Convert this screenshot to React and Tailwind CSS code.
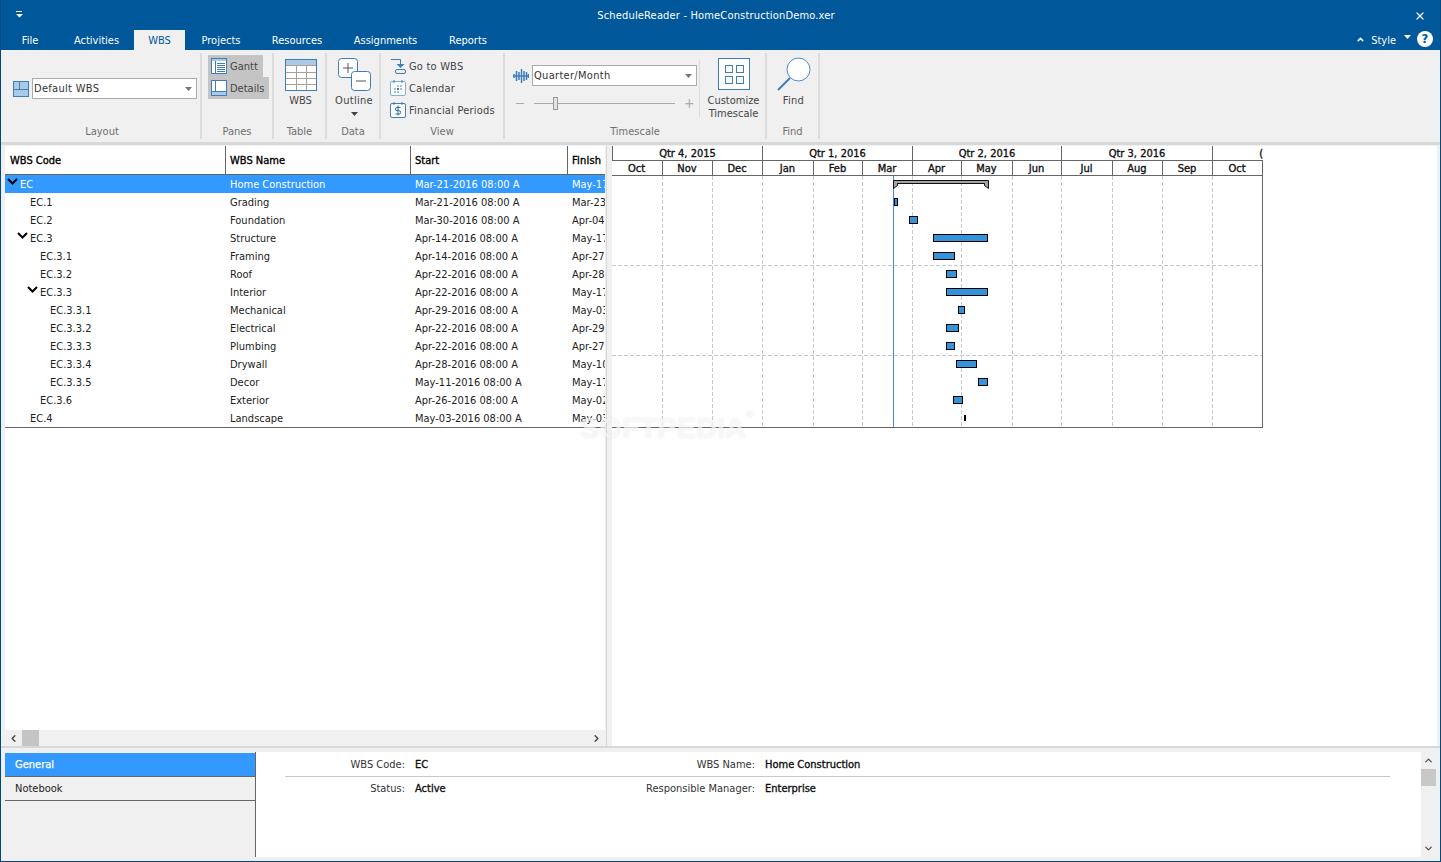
import React from 'react';
import { ChevronLeft, ChevronRight, ChevronUp, ChevronDown, X } from 'lucide-react';

const rows = [
  { code: 'EC', name: 'Home Construction', start: 'Mar-21-2016 08:00 A', finish: 'May-17', indent: 15, open: true, selected: true },
  { code: 'EC.1', name: 'Grading', start: 'Mar-21-2016 08:00 A', finish: 'Mar-23', indent: 25 },
  { code: 'EC.2', name: 'Foundation', start: 'Mar-30-2016 08:00 A', finish: 'Apr-04', indent: 25 },
  { code: 'EC.3', name: 'Structure', start: 'Apr-14-2016 08:00 A', finish: 'May-17', indent: 25, open: true },
  { code: 'EC.3.1', name: 'Framing', start: 'Apr-14-2016 08:00 A', finish: 'Apr-27', indent: 35 },
  { code: 'EC.3.2', name: 'Roof', start: 'Apr-22-2016 08:00 A', finish: 'Apr-28', indent: 35 },
  { code: 'EC.3.3', name: 'Interior', start: 'Apr-22-2016 08:00 A', finish: 'May-17', indent: 35, open: true },
  { code: 'EC.3.3.1', name: 'Mechanical', start: 'Apr-29-2016 08:00 A', finish: 'May-03', indent: 45 },
  { code: 'EC.3.3.2', name: 'Electrical', start: 'Apr-22-2016 08:00 A', finish: 'Apr-29', indent: 45 },
  { code: 'EC.3.3.3', name: 'Plumbing', start: 'Apr-22-2016 08:00 A', finish: 'Apr-27', indent: 45 },
  { code: 'EC.3.3.4', name: 'Drywall', start: 'Apr-28-2016 08:00 A', finish: 'May-10', indent: 45 },
  { code: 'EC.3.3.5', name: 'Decor', start: 'May-11-2016 08:00 A', finish: 'May-17', indent: 45 },
  { code: 'EC.3.6', name: 'Exterior', start: 'Apr-26-2016 08:00 A', finish: 'May-02', indent: 35 },
  { code: 'EC.4', name: 'Landscape', start: 'May-03-2016 08:00 A', finish: 'May-03', indent: 25 },
];

const quarters = [
  { label: 'Qtr 4, 2015', w: 150 },
  { label: 'Qtr 1, 2016', w: 150 },
  { label: 'Qtr 2, 2016', w: 149 },
  { label: 'Qtr 3, 2016', w: 151 },
];

const months = [
  ['Oct', 51], ['Nov', 50], ['Dec', 50], ['Jan', 51], ['Feb', 49], ['Mar', 50],
  ['Apr', 49], ['May', 51], ['Jun', 49], ['Jul', 51], ['Aug', 50], ['Sep', 50], ['Oct', 50],
];

// chart coordinates, x from 612 and y from the top of the first row
const bars = [
  [282, 22, 4, 8], [297, 40, 9, 8], [321, 58, 55, 8], [321, 76, 22, 8], [334, 94, 11, 8],
  [334, 112, 42, 8], [346, 130, 7, 8], [334, 148, 13, 8], [334, 166, 9, 8], [344, 184, 21, 8],
  [366, 202, 10, 8], [341, 220, 10, 8],
];

const gridX = [50, 100, 150, 201, 250, 300, 349, 400, 449, 500, 550, 600];

const RibbonGroup = ({ label, width, children }) => (
  <div className="flex flex-col border-r-2 border-[#dcdcdc] h-[86px] mt-[3px]" style={{ width }}>
    <div className="h-[70px] relative">{children}</div>
    <div className="h-[16px] text-center text-[#6f6f6f] leading-[18px]">{label}</div>
  </div>
);

const Caret = ({ className }) => (
  <svg width="7" height="4" viewBox="0 0 7 4" className={className}>
    <path d="M0 0h7L3.5 4z" fill="currentColor" />
  </svg>
);

const Combo = ({ value, width }) => (
  <div className="flex items-center justify-between bg-white border border-[#ababab] h-[21px] pl-[1px] pr-[4px] text-[#333] tracking-[0.3px]" style={{ width }}>
    <span className="pt-[2px]">{value}</span>
    <Caret className="text-[#777]" />
  </div>
);

const GridIcon = () => (
  <svg width="32" height="32" viewBox="0 0 32 32">
    <rect x="0.5" y="0.5" width="31" height="31" fill="#fff" stroke="#3f7cba" />
    <rect x="1" y="1" width="30" height="5" fill="#a9cbe8" />
    <path d="M1 6.5h30M1 13.5h30M1 19.5h30M1 25.5h30M11.5 7v24M21.5 7v24" stroke="#a8a098" />
  </svg>
);

const OutlineIcon = () => (
  <svg width="33" height="33" viewBox="0 0 33 33">
    <rect x="0.5" y="0.5" width="19" height="19" rx="3" fill="#fff" stroke="#3f7cba" />
    <path d="M5 10h10M10 5v10" stroke="#555" />
    <rect x="13.5" y="13.5" width="19" height="19" rx="3" fill="#fff" stroke="#3f7cba" />
    <path d="M18 23h10" stroke="#555" />
  </svg>
);

const LayoutIcon = () => (
  <svg width="16" height="16" viewBox="0 0 16 16">
    <rect x="0.5" y="0.5" width="15" height="15" fill="#a9cbe8" stroke="#3f7cba" />
    <path d="M0 8.5h16M6.5 0v8" stroke="#3f7cba" />
  </svg>
);

const GanttIcon = () => (
  <svg width="16" height="16" viewBox="0 0 16 16">
    <rect x="0.5" y="0.5" width="15" height="15" fill="#fff" stroke="#3f7cba" />
    <rect x="1" y="1" width="14" height="2" fill="#a9cbe8" />
    <path d="M4.5 3v12" stroke="#3f7cba" />
    <path d="M6 5.5h8M6 7.5h8M6 9.5h8M6 11.5h8M6 13.5h8" stroke="#3f7cba" />
  </svg>
);

const DetailsIcon = () => (
  <svg width="16" height="16" viewBox="0 0 16 16">
    <rect x="0.5" y="0.5" width="15" height="15" fill="#fff" stroke="#3f7cba" />
    <rect x="1" y="12" width="14" height="3" fill="#a9cbe8" />
    <path d="M0 11.5h16M4.5 1v10" stroke="#3f7cba" />
  </svg>
);

const GoToIcon = () => (
  <svg width="16" height="16" viewBox="0 0 16 16" fill="none">
    <path d="M1 1.5h9.5V7" stroke="#3f7cba" />
    <path d="M6.5 6h8L10.5 10z" fill="#3f7cba" />
    <rect x="5.5" y="11.5" width="10" height="4" rx="1.5" stroke="#3f7cba" />
  </svg>
);

const CalendarIcon = () => (
  <svg width="16" height="16" viewBox="0 0 16 16" fill="none">
    <rect x="0.5" y="1.5" width="15" height="14" rx="1.5" fill="#fff" stroke="#7fb0dc" />
    <path d="M4 0v3M12 0v3" stroke="#3f7cba" />
    <path d="M7 5h2v2H7zM10 5h2v2h-2zM4 8h2v2H4zM10 8h2v2h-2zM4 11h2v2H4zM7 11h2v2H7z" fill="#9cc2e5" />
    <path d="M7 8h2v2H7z" fill="#3f7cba" />
  </svg>
);

const DollarIcon = () => (
  <svg width="16" height="16" viewBox="0 0 16 16" fill="none">
    <rect x="0.5" y="1.5" width="15" height="14" rx="1.5" fill="#fff" stroke="#3f7cba" />
    <path d="M4 0v3M12 0v3" stroke="#3f7cba" />
    <path d="M10.5 5.5H7a1.5 1.5 0 0 0 0 3.2h2a1.5 1.5 0 0 1 0 3.3H5.5M8 3.5v10" stroke="#2f6aa8" />
  </svg>
);

const WaveIcon = () => (
  <svg width="16" height="14" viewBox="0 0 16 14">
    <path d="M1 5v4M3.5 2v10M6 3v8M8.5 0v14M11 2v10M13.5 3v8M15.5 5v4M0 7h16" stroke="#3f7cba" strokeWidth="1.5" />
  </svg>
);

const TimescaleIcon = () => (
  <svg width="32" height="32" viewBox="0 0 32 32" fill="none">
    <rect x="0.5" y="0.5" width="31" height="31" fill="#fff" stroke="#3f7cba" />
    <rect x="7.5" y="7.5" width="7" height="7" stroke="#3f7cba" />
    <rect x="18.5" y="7.5" width="7" height="7" stroke="#3f7cba" />
    <rect x="7.5" y="18.5" width="7" height="7" stroke="#3f7cba" />
    <rect x="18.5" y="18.5" width="7" height="7" stroke="#3f7cba" />
  </svg>
);

const FindIcon = () => (
  <svg width="34" height="34" viewBox="0 0 34 34" fill="none">
    <circle cx="21.5" cy="12.5" r="11.5" fill="#fff" stroke="#4a8ac6" />
    <path d="M13 21L1 33" stroke="#3f7cba" strokeWidth="2" />
  </svg>
);

const SummaryBar = () => (
  <svg width="97" height="9" viewBox="0 0 97 9" className="absolute left-[281px] top-[4px]">
    <path d="M0.5 0.5h95v8l-4-3v-2h-87v2l-4 3z" fill="#a0a4a8" stroke="#111" />
    <path d="M4.5 3.5h87" stroke="#111" />
  </svg>
);

const TableRow = ({ row }) => (
  <div className={`flex h-[18px] leading-[20px] whitespace-nowrap ${row.selected ? 'bg-[#3399ff] text-white' : 'text-[#222]'}`}>
    <div className="w-[225px] relative shrink-0" style={{ paddingLeft: row.indent }}>
      {row.open && (
        <svg width="11" height="7" viewBox="0 0 11 7" className="absolute top-[3px]" style={{ left: row.indent - 13 }}>
          <path d="M1 1l4.5 4.5L10 1" fill="none" stroke="#000" strokeWidth="2" />
        </svg>
      )}
      {row.code}
    </div>
    <div className="w-[185px] shrink-0">{row.name}</div>
    <div className="w-[157px] shrink-0">{row.start}</div>
    <div className="w-[33px] h-[18px] shrink-0 overflow-hidden">{row.finish}</div>
  </div>
);

export default function App() {
  return (
    <div className="relative w-[1441px] h-[862px] overflow-hidden flex flex-col bg-[#00589b] text-[11px] border-x border-b border-[#00487f] font-['DejaVu_Sans_Condensed','DejaVu_Sans',sans-serif]">
      {/* title bar */}
      <div className="h-[28px] relative flex items-center justify-center text-white shrink-0 pr-[9px]">
        <svg width="7" height="7" viewBox="0 0 7 7" className="absolute left-[15px] top-[11px]">
          <path d="M0 0h6v1H0zM0 3h7L3.5 6.5z" fill="#fff" />
        </svg>
        <span className="pt-[5px] tracking-[0.17px]">ScheduleReader - HomeConstructionDemo.xer</span>
        <X size={12} strokeWidth={2.5} className="absolute right-[14px] top-[10px]" />
      </div>

      {/* tabs */}
      <div className="h-[22px] flex items-end text-white shrink-0 relative leading-[20px] pl-[4px]">
        <div className="h-[20px] w-[50px] text-center pt-[1px]">File</div>
        <div className="h-[20px] w-[75px] ml-[4px] text-center pt-[1px]">Activities</div>
        <div className="h-[20px] w-[51px] text-center bg-[#f0f0f0] text-[#00589b] pt-[1px]">WBS</div>
        <div className="h-[20px] w-[72px] text-center pt-[1px]">Projects</div>
        <div className="h-[20px] w-[80px] text-center pt-[1px]">Resources</div>
        <div className="h-[20px] w-[97px] text-center pt-[1px]">Assignments</div>
        <div className="h-[20px] w-[68px] text-center pt-[1px]">Reports</div>
        <div className="ml-auto h-[22px] flex items-center pr-[7px]">
          <ChevronUp size={9} strokeWidth={4} className="mr-[6px] mt-[1px]" />
          <span className="pt-[3px]">Style</span>
          <Caret className="ml-[8px] mb-[4px] text-white" />
          <div className="ml-[6px] w-[16px] h-[16px] rounded-full bg-white text-[#00589b] text-center font-bold text-[13px] leading-[16px]">?</div>
        </div>
      </div>

      {/* ribbon */}
      <div className="h-[95px] bg-[#f0f0f0] border-b-[3px] border-[#d8d8d8] flex pl-[3px] shrink-0">
        <RibbonGroup label="Layout" width={198}>
          <div className="flex items-center gap-[3px] pl-[9px] pt-[25px]">
            <LayoutIcon />
            <Combo value="Default WBS" width={165} />
          </div>
        </RibbonGroup>
        <RibbonGroup label="Panes" width={72}>
          <div className="pl-[6px] pt-[2px] text-[#444]">
            <div className="flex items-center gap-[3px] h-[22px] w-[55px] bg-[#c4c4c4] pl-[3px]"><GanttIcon /><span className="pt-[2px]">Gantt</span></div>
            <div className="flex items-center gap-[3px] h-[22px] w-[61px] bg-[#c4c4c4] pl-[3px]"><DetailsIcon /><span className="pt-[2px]">Details</span></div>
          </div>
        </RibbonGroup>
        <RibbonGroup label="Table" width={53}>
          <div className="flex flex-col items-center pt-[6px] pl-[2px] text-[#444] gap-[2px]">
            <GridIcon />
            <span>WBS</span>
          </div>
        </RibbonGroup>
        <RibbonGroup label="Data" width={54}>
          <div className="flex flex-col items-center pt-[5px] pl-[2px] text-[#444] gap-[2px] tracking-[0.3px]">
            <OutlineIcon />
            <span>Outline</span>
            <Caret className="text-[#444]" />
          </div>
        </RibbonGroup>
        <RibbonGroup label="View" width={124}>
          <div className="pl-[9px] pt-[2px] text-[#444] tracking-[0.2px]">
            <div className="flex items-center gap-[3px] h-[22px]"><GoToIcon /><span className="pt-[2px]">Go to WBS</span></div>
            <div className="flex items-center gap-[3px] h-[22px]"><CalendarIcon /><span className="pt-[2px]">Calendar</span></div>
            <div className="flex items-center gap-[3px] h-[22px]"><DollarIcon /><span className="pt-[2px]">Financial Periods</span></div>
          </div>
        </RibbonGroup>
        <RibbonGroup label="Timescale" width={262}>
          <div className="flex h-full">
            <div className="w-[194px] shrink-0 pl-[8px] pt-[12px]">
              <div className="flex items-center gap-[3px]">
                <WaveIcon />
                <Combo value="Quarter/Month" width={165} />
              </div>
              <div className="flex items-center h-[14px] mt-[10px] text-[#aaa] pl-[3px]">
                <div className="w-[8px] h-[1px] bg-[#aaa]" />
                <div className="ml-[10px] w-[141px] h-[1px] bg-[#aaa] relative">
                  <div className="absolute left-[19px] -top-[6px] w-[5px] h-[13px] bg-[#e4e4e4] border border-[#999]" />
                </div>
                <div className="ml-[9px] text-[14px] leading-[14px]">+</div>
              </div>
            </div>
            <div className="w-[1px] h-[57px] bg-[#dcdcdc] mt-[7px]" />
            <div className="flex flex-col items-center pt-[5px] pl-[2px] flex-1 text-[#444] leading-[13px]">
              <TimescaleIcon />
              <span className="mt-[4px]">Customize</span>
              <span>Timescale</span>
            </div>
          </div>
        </RibbonGroup>
        <RibbonGroup label="Find" width={53}>
          <div className="flex flex-col items-center pt-[4px] pl-[2px] text-[#444] gap-[2px] tracking-[0.3px]">
            <FindIcon />
            <span>Find</span>
          </div>
        </RibbonGroup>
      </div>

      {/* main panes */}
      <div className="flex h-[601px] bg-[#f0f0f0] pl-[3px] pr-[3px] shrink-0">
        <div className="w-[600px] bg-white flex flex-col mt-[1px] ml-[1px] overflow-hidden">
          <div className="flex h-[29px] text-black border-b border-[#666] items-center whitespace-nowrap shrink-0 [-webkit-text-stroke:0.35px_#000]">
            <div className="w-[221px] h-full flex items-center pl-[5px] pt-[2px] border-r border-[#666]">WBS Code</div>
            <div className="w-[185px] h-full flex items-center pl-[4px] pt-[2px] border-r border-[#666]">WBS Name</div>
            <div className="w-[157px] h-full flex items-center pl-[4px] pt-[2px] border-r border-[#666]">Start</div>
            <div className="pl-[4px] pt-[2px] tracking-[0.2px]">Finish</div>
          </div>
          <div className="border-b border-[#666] shrink-0">
            {rows.map((row) => <TableRow key={row.code} row={row} />)}
          </div>
          <div className="flex-1" />
          <div className="h-[16px] bg-[#f0f0f0] flex items-center shrink-0 text-[#444]">
            <ChevronLeft size={11} strokeWidth={3} className="ml-[3px]" />
            <div className="ml-[3px] w-[17px] h-[16px] bg-[#c4c4c4]" />
            <ChevronRight size={11} strokeWidth={3} className="ml-auto mr-[3px]" />
          </div>
        </div>

        <div className="w-[1px] mt-[1px] bg-[#d8d8d8] ml-[1px]" />
        <div className="w-[5px]" />

        <div className="flex-1 bg-white mt-[1px] relative">
          <div className="w-[651px] h-[282px] relative border-b border-[#666] overflow-hidden">
            <div className="flex h-[15px] text-[#111] text-center leading-[15px] border-l border-[#666] border-b whitespace-nowrap [-webkit-text-stroke:0.35px_#111]">
              {quarters.map((q) => (
                <div key={q.label} className="border-r border-[#666]" style={{ width: q.w }}>{q.label}</div>
              ))}
              <div className="flex-1 text-right">(</div>
            </div>
            <div className="flex h-[15px] text-[#111] text-center leading-[15px] border-b border-[#666] [-webkit-text-stroke:0.35px_#111]">
              {months.map(([m, w], i) => (
                <div key={i} className="border-r border-[#666] pr-[1px]" style={{ width: w }}>{m}</div>
              ))}
            </div>
            <div className="absolute left-0 right-0 top-[30px] bottom-0 border-r border-[#666]">
              {gridX.map((x) => (
                <div key={x} className="absolute top-0 bottom-0 w-[1px] bg-[repeating-linear-gradient(to_bottom,#c8c8c8_0,#c8c8c8_4px,transparent_4px,transparent_6px)]" style={{ left: x }} />
              ))}
              <div className="absolute left-0 right-0 top-[89px] h-[1px] bg-[repeating-linear-gradient(to_right,#c8c8c8_0,#c8c8c8_4px,transparent_4px,transparent_6px)]" />
              <div className="absolute left-0 right-0 top-[179px] h-[1px] bg-[repeating-linear-gradient(to_right,#c8c8c8_0,#c8c8c8_4px,transparent_4px,transparent_6px)]" />
              <div className="absolute left-[281px] top-0 bottom-0 w-[1px] bg-[#3f8ae0]" />
              <SummaryBar />
              {bars.map(([x, y, w, h]) => (
                <div key={`${x}-${y}`} className="absolute bg-[#3394dc] border border-black" style={{ left: x, top: y, width: w, height: h }} />
              ))}
              <div className="absolute left-[352px] top-[239px] w-[2px] h-[6px] bg-black" />
            </div>
          </div>
        </div>
      </div>

      {/* details */}
      <div className="h-[115px] bg-[#f0f0f0] border-t-2 border-[#d8d8d8] flex pl-[4px] pr-[4px] pt-[4px] shrink-0">
        <div className="w-[251px] h-[105px] pt-[1px] border-r border-[#666] shrink-0">
          <div className="h-[24px] bg-[#3399ff] text-white leading-[24px] pl-[10px] border-b border-[#666] [-webkit-text-stroke:0.25px_#fff]">General</div>
          <div className="h-[24px] text-[#222] leading-[24px] pl-[10px] border-b border-[#666]">Notebook</div>
        </div>
        <div className="flex-1 h-[105px] bg-white flex">
          <div className="flex-1 pl-[29px] pr-[31px] text-[#333]">
            <div className="flex h-[25px] items-center border-b border-[#c8c8c8] pt-[2px]">
              <div className="w-[120px] text-right">WBS Code:</div>
              <div className="ml-[10px] w-[130px] text-[#111] [-webkit-text-stroke:0.35px_#111]">EC</div>
              <div className="w-[210px] text-right">WBS Name:</div>
              <div className="ml-[10px] text-[#111] [-webkit-text-stroke:0.35px_#111]">Home Construction</div>
            </div>
            <div className="flex h-[24px] items-center pt-[1px]">
              <div className="w-[120px] text-right">Status:</div>
              <div className="ml-[10px] w-[130px] text-[#111] [-webkit-text-stroke:0.35px_#111]">Active</div>
              <div className="w-[210px] text-right">Responsible Manager:</div>
              <div className="ml-[10px] text-[#111] [-webkit-text-stroke:0.35px_#111]">Enterprise</div>
            </div>
          </div>
          <div className="w-[15px] bg-[#f0f0f0] flex flex-col items-center text-[#555] shrink-0">
            <ChevronUp size={11} strokeWidth={3} className="mt-[3px]" />
            <div className="w-[15px] h-[17px] bg-[#c8c8c8] mt-[3px]" />
            <ChevronDown size={11} strokeWidth={3} className="mt-auto mb-[3px]" />
          </div>
        </div>
      </div>

      {/* watermark */}
      <div className="absolute left-[579px] top-[407px] text-[29px] font-bold text-white/70 [text-shadow:0_0_2px_rgba(0,0,0,0.1)] whitespace-nowrap font-['Liberation_Sans',sans-serif]">
        SOFTPEDIA<span className="text-[10px] align-top">®</span>
      </div>
    </div>
  );
}
